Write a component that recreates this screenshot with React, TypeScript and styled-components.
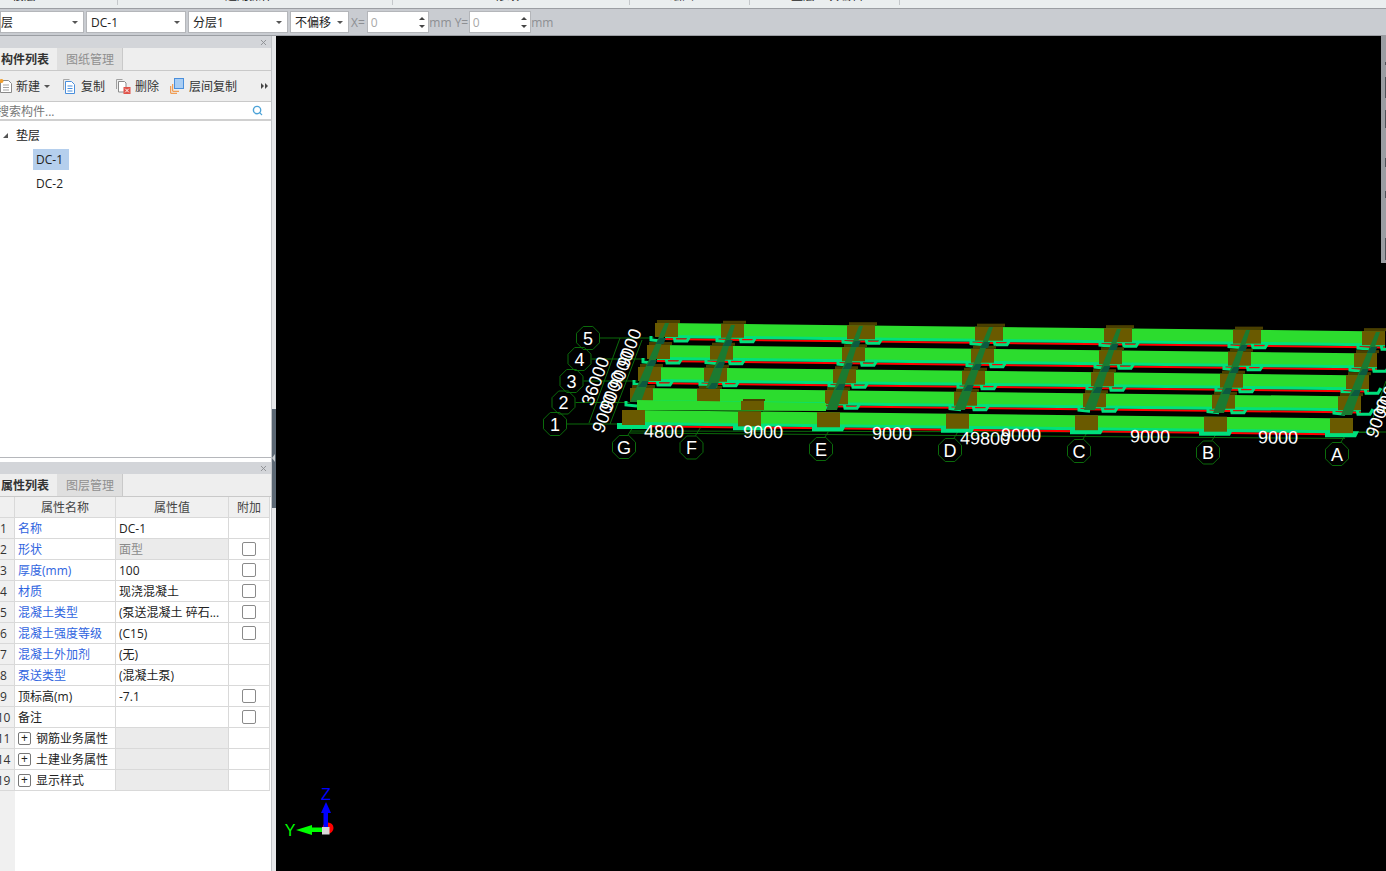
import styled, { createGlobalStyle } from "styled-components";
import { Search, X } from "lucide-react";

const GlobalStyle = createGlobalStyle`
  html, body, #root {
    margin: 0;
    padding: 0;
    width: 100%;
    height: 100%;
    overflow: hidden;
  }
  body {
    font-family: "Open Sans", "Noto Sans CJK SC", sans-serif;
    font-size: 12px;
    color: #222;
  }
`;

const ribbonGroups = [
  { w: 118, text: "楼层", pad: 12 },
  { w: 275, text: "通用操作", pad: 107 },
  { w: 237, text: "修改", pad: 102 },
  { w: 120, text: "绘图", pad: 40 },
  { w: 150, text: "垫层二次编辑", pad: 41 },
];

const selects = [
  { w: 84, text: "层", pad: 0 },
  { w: 100, text: "DC-1", pad: 4 },
  { w: 100, text: "分层1", pad: 4 },
  { w: 59, text: "不偏移", pad: 4 },
];

const props = [
  { no: "1", name: "名称", value: "DC-1", blue: true },
  { no: "2", name: "形状", value: "面型", blue: true, check: true, locked: true },
  { no: "3", name: "厚度(mm)", value: "100", blue: true, check: true },
  { no: "4", name: "材质", value: "现浇混凝土", blue: true, check: true },
  { no: "5", name: "混凝土类型", value: "(泵送混凝土 碎石...", blue: true, check: true },
  { no: "6", name: "混凝土强度等级", value: "(C15)", blue: true, check: true },
  { no: "7", name: "混凝土外加剂", value: "(无)", blue: true },
  { no: "8", name: "泵送类型", value: "(混凝土泵)", blue: true },
  { no: "9", name: "顶标高(m)", value: "-7.1", check: true },
  { no: "10", name: "备注", value: "", check: true },
  { no: "11", name: "钢筋业务属性", group: true },
  { no: "14", name: "土建业务属性", group: true },
  { no: "19", name: "显示样式", group: true },
];

const stripMarks = [
  { top: 26, h: 3 },
  { top: 41, h: 21 },
  { top: 74, h: 18 },
  { top: 122, h: 9 },
  { top: 155, h: 7 },
  { top: 202, h: 22 },
];

// left edge of the concrete blocks on each row, front row first
const rows = [
  { x0: 622, y0: 410, w: 23, cols: [622, 738, 817, 946, 1075, 1204, 1330] },
  { x0: 630, y0: 388, w: 23, cols: [630, 697, 825, 954, 1083, 1212, 1338] },
  { x0: 638, y0: 367, w: 23, cols: [638, 704, 833, 962, 1091, 1220, 1346] },
  { x0: 647, y0: 345, w: 23, cols: [647, 710, 842, 971, 1099, 1228, 1354] },
  { x0: 655, y0: 323, w: 28, cols: [655, 721, 847, 975, 1104, 1233, 1362] },
];
const slope = 0.0115;

const shafts = [
  [666, 323, 634, 402],
  [732, 325, 710, 388],
  [860, 326, 830, 410],
  [990, 327, 958, 410],
  [1118, 329, 1088, 410],
  [1247, 330, 1217, 413],
  [1377, 332, 1345, 415],
];

const rowAxes = [
  { t: "1", x: 555, y: 424 },
  { t: "2", x: 563.5, y: 402.5 },
  { t: "3", x: 571.5, y: 381 },
  { t: "4", x: 579.5, y: 359 },
  { t: "5", x: 588, y: 338 },
];

const colAxes = [
  { t: "G", x: 624, y: 447 },
  { t: "F", x: 691.5, y: 447.5 },
  { t: "E", x: 821, y: 449 },
  { t: "D", x: 950, y: 450 },
  { t: "C", x: 1079, y: 451 },
  { t: "B", x: 1208, y: 452.5 },
  { t: "A", x: 1337, y: 454 },
];

const dims = [
  { t: "4800", x: 664, y: 431 },
  { t: "9000", x: 763, y: 431.5 },
  { t: "9000", x: 892, y: 433 },
  { t: "9000", x: 1021, y: 434.5 },
  { t: "49800", x: 985, y: 438 },
  { t: "9000", x: 1150, y: 436 },
  { t: "9000", x: 1278, y: 437 },
];

const sideDims = [
  { t: "9000", x: 629, y: 348 },
  { t: "9000", x: 621, y: 370 },
  { t: "9000", x: 612, y: 391 },
  { t: "9000", x: 604, y: 413 },
  { t: "36000", x: 595, y: 381 },
];

const bubble = (cx: number, cy: number, r: number) =>
  Array.from({ length: 8 }, (_, i) => {
    const a = (Math.PI * 2 * i) / 8 + Math.PI / 8;
    return `${(cx + r * Math.cos(a)).toFixed(1)},${(cy + r * Math.sin(a)).toFixed(1)}`;
  }).join(" ");

type RowData = (typeof rows)[number];

const BeamRow = ({ r, front }: { r: RowData; front?: boolean }) => {
  const yAt = (x: number) => r.y0 + (x - r.x0) * slope;
  const lastCol = r.cols[r.cols.length - 1];
  const end = lastCol + 23;
  const start = r.x0 + 10;
  return (
    <g>
      <polygon
        fill="#ff0000"
        points={`${start},${yAt(start) + 15} ${end},${yAt(end) + 15} ${end},${yAt(end) + 17} ${start},${yAt(start) + 17}`}
      />
      <polygon
        fill="#00e07c"
        points={`${start},${yAt(start) + 1} ${end},${yAt(end) + 1} ${end},${yAt(end) + 15} ${start},${yAt(start) + 15}`}
      />
      <polygon
        fill="#2cdc2e"
        points={`${start},${yAt(start)} ${end},${yAt(end)} ${end},${yAt(end) + 12} ${start},${yAt(start) + 12}`}
      />
      {r.cols.map((x, i) => {
        const y = yAt(x);
        const w = i === 0 || i === 1 || i === 6 ? 23 : r.w;
        if (front) {
          return (
            <g key={x}>
              <polygon points={`${x - 5},${y + 13} ${x + 29},${y + 13} ${x + 26},${y + 19} ${x - 5},${y + 19}`} fill="#00e07c" />
              <rect x={x} y={y} width={w} height="15" fill="#6a5a00" />
            </g>
          );
        }
        return (
          <g key={x}>
            <polyline
              points={`${x - 4},${y + 13} ${x - 4},${y + 17} ${x + 7},${y + 18}`}
              fill="none"
              stroke="#00e07c"
              strokeWidth="3"
            />
            <polyline
              points={`${x + 19},${y + 13} ${x + 20},${y + 18} ${x + 32},${y + 18} ${x + 35},${y + 13}`}
              fill="none"
              stroke="#00e07c"
              strokeWidth="3"
            />
            <rect x={x + 2} y={y - 3} width={w} height="3" fill="#4a3f00" />
            <rect x={x} y={y} width={w} height="14" fill="#6a5a00" />
          </g>
        );
      })}
    </g>
  );
};

const Scene = () => (
  <SceneSvg viewBox="276 36 1110 835">
    {/* grid lines */}
    <g stroke="#0b6b0b" strokeWidth="1" fill="none">
      {rowAxes.map((a) => (
        <line key={a.t} x1={a.x + 12} y1={a.y} x2={a.x + 66} y2={a.y} />
      ))}
      {colAxes.map((a) => (
        <line key={a.t} x1={a.x + 4} y1={a.y - 12} x2={a.x + 9} y2={a.y - 20} />
      ))}
      <line x1="620" y1="338" x2="589" y2="423" />
      <line x1="642" y1="340" x2="610" y2="424" />
      <line x1="630" y1="431" x2="1372" y2="432.5" />
      <line x1="630" y1="433" x2="1345" y2="438.5" />
      <line x1="1386" y1="381" x2="1368" y2="432" />
      <line x1="1340" y1="432" x2="1386" y2="432" />
      <line x1="1372" y1="410" x2="1386" y2="410" />
      <line x1="1378" y1="389" x2="1386" y2="389" />
    </g>

    {/* back rows first so the front ones overlap them */}
    {rows
      .slice(1)
      .reverse()
      .map((r) => (
        <BeamRow key={r.y0} r={r} />
      ))}

    {/* dark column shafts running across the rows */}
    {shafts.map(([x1, y1, x2, y2]) => {
      const xAt = (y: number) => x1 + ((x2 - x1) * (y - y1)) / (y2 - y1);
      return (
        <g key={x1}>
          <polygon fill="#1b7a30" points={`${x1 - 1},${y1} ${x1 + 3},${y1} ${x2 + 7},${y2} ${x2 - 4},${y2}`} />
          {[15, 37, 58].map((d) => (
            <polygon
              key={d}
              fill="#0c5a40"
              points={`${xAt(y1 + d)},${y1 + d} ${xAt(y1 + d) + 6},${y1 + d} ${xAt(y1 + d + 6) + 6},${y1 + d + 6} ${xAt(y1 + d + 6) - 2},${y1 + d + 6}`}
            />
          ))}
        </g>
      );
    })}

    {/* band between the two front rows */}
    <polygon fill="#2cdc2e" points="637,400 826,403 826,411 637,410" />
    <rect x="741" y="401" width="23" height="9" fill="#6a5a00" />
    <rect x="743" y="399" width="22" height="2" fill="#4a3f00" />

    <BeamRow r={rows[0]} front />

    {/* axis bubbles */}
    {[...rowAxes, ...colAxes].map((a) => (
      <g key={a.t}>
        <polygon points={bubble(a.x, a.y, 12.5)} fill="none" stroke="#0b6b0b" strokeWidth="1" />
        <SceneLabel x={a.x} y={a.y + 6.5} textAnchor="middle">
          {a.t}
        </SceneLabel>
      </g>
    ))}

    {/* dimensions */}
    {dims.map((d) => (
      <SceneLabel key={d.x} x={d.x} y={d.y + 6.5} textAnchor="middle" transform={`rotate(0.6 ${d.x} ${d.y})`}>
        {d.t}
      </SceneLabel>
    ))}
    {sideDims.map((d) => (
      <SceneLabel key={d.y} x={d.x} y={d.y + 6.5} textAnchor="middle" transform={`rotate(-70 ${d.x} ${d.y})`}>
        {d.t}
      </SceneLabel>
    ))}
    <SceneLabel x="1378" y="424" textAnchor="middle" transform="rotate(-70 1378 418)">
      9000
    </SceneLabel>
    <SceneLabel x="1388" y="402" textAnchor="middle" transform="rotate(-70 1388 396)">
      9000
    </SceneLabel>

    {/* axis gizmo */}
    <circle cx="328" cy="828" r="5.5" fill="#ff0000" />
    <rect x="323.5" y="812" width="4.5" height="16" fill="#0000ff" />
    <polygon points="326,802 331,813 321,813" fill="#0000ff" />
    <rect x="311" y="827.5" width="12" height="4.5" fill="#00ff00" />
    <polygon points="296,830 312,825 312,835" fill="#00ff00" />
    <rect x="322" y="827" width="7.5" height="7.5" fill="#d8d8d8" />
    <GizmoLabel x="326" y="800" textAnchor="middle" fill="#0000ff">
      Z
    </GizmoLabel>
    <GizmoLabel x="290" y="836" textAnchor="middle" fill="#00ff00">
      Y
    </GizmoLabel>
  </SceneSvg>
);

const NewIcon = () => (
  <svg width="12" height="14" viewBox="0 0 12 14">
    <path d="M.5 1.5h8l3 3v9H.5z" fill="#fff" stroke="#8a8a8a" />
    <path d="M3 6h6M3 8.5h6M3 11h6" stroke="#a5a5a5" />
    <circle cx="1.5" cy="2" r="2" fill="#f0a030" />
  </svg>
);

const CopyIcon = () => (
  <svg width="12" height="15" viewBox="0 0 12 15">
    <path d="M.5 11V.5h6" fill="none" stroke="#a8a8a8" />
    <path d="M2.5 2.5h6l3 3v9h-9z" fill="#fff" stroke="#4a8fdc" />
    <path d="M4.5 7h5M4.5 9.500h5M4.5 12h5" stroke="#4a8fdc" />
  </svg>
);

const DeleteIcon = () => (
  <svg width="15" height="15" viewBox="0 0 15 15">
    <path d="M.5 10V.5h6" fill="none" stroke="#a0a0a0" />
    <path d="M2.5 2.5h6l1.500 1.500v9h-7.500z" fill="#fff" stroke="#8a8a8a" />
    <rect x="7.5" y="8" width="7" height="7" fill="#e0534a" />
    <path d="M9.200 9.700l3.600 3.600M12.800 9.700l-3.600 3.600" stroke="#fff" />
  </svg>
);

const FloorCopyIcon = () => (
  <svg width="14" height="16" viewBox="0 0 14 16">
    <path d="M.7 8v7.300H7" fill="none" stroke="#f08a30" />
    <path d="M2.700 6v7.300H9" fill="none" stroke="#f08a30" />
    <rect x="4.500" y=".5" width="9" height="10" fill="#a9cdf3" stroke="#4a8fdc" />
  </svg>
);

const Spin = () => (
  <SpinBox>
    <SpinUp />
    <SpinDown />
  </SpinBox>
);

const App = () => {
  return (
    <Page>
      <GlobalStyle />
      <Ribbon>
        {ribbonGroups.map((g) => (
          <RibbonGroup key={g.text} $w={g.w} $pad={g.pad}>
            <RibbonText>{g.text}</RibbonText>
          </RibbonGroup>
        ))}
      </Ribbon>
      <Toolbar>
        {selects.map((s) => (
          <SelectBox key={s.text} $w={s.w} $pad={s.pad}>
            <span>{s.text}</span>
            <ArrowGlyph />
          </SelectBox>
        ))}
        <FieldLabel>X=</FieldLabel>
        <NumberBox>
          0
          <Spin />
        </NumberBox>
        <FieldLabel $tight>mm Y=</FieldLabel>
        <NumberBox>
          0
          <Spin />
        </NumberBox>
        <FieldLabel $tight>mm</FieldLabel>
      </Toolbar>
      <Main>
        <Sidebar>
          <ComponentPane>
            <PaneHeader>
              <X size={9} strokeWidth={2.4} color="#8b8d91" />
            </PaneHeader>
            <Tabs>
              <Tab $active>构件列表</Tab>
              <Tab>图纸管理</Tab>
            </Tabs>
            <ActionBar>
              <Action $w={63} $gap={4}>
                <NewIcon />
                <span>新建</span>
                <Caret />
              </Action>
              <Action $w={53} $gap={6}>
                <CopyIcon />
                <span>复制</span>
              </Action>
              <Action $w={54} $gap={4}>
                <DeleteIcon />
                <span>删除</span>
              </Action>
              <Action $w={90} $gap={5}>
                <FloorCopyIcon />
                <span>层间复制</span>
              </Action>
              <More>
                <MoreArrow />
                <MoreArrow />
              </More>
            </ActionBar>
            <SearchRow>
              <span>搜索构件...</span>
              <Search size={11} strokeWidth={3} color="#4da3d8" />
            </SearchRow>
            <Tree>
              <TreeGroup>
                <TreeToggle />
                <span>垫层</span>
              </TreeGroup>
              <TreeItem $selected>DC-1</TreeItem>
              <TreeItem>DC-2</TreeItem>
            </Tree>
          </ComponentPane>
          <PropertyPane>
            <PaneHeader>
              <X size={9} strokeWidth={2.4} color="#8b8d91" />
            </PaneHeader>
            <Tabs>
              <Tab $active>属性列表</Tab>
              <Tab>图层管理</Tab>
            </Tabs>
            <TableWrap>
              <Table>
                <HeadRow>
                  <NoCell />
                  <HeadCell>属性名称</HeadCell>
                  <HeadCell>属性值</HeadCell>
                  <HeadCell>附加</HeadCell>
                </HeadRow>
                {props.map((p) => (
                  <Row key={p.no}>
                    <NoCell>{p.no}</NoCell>
                    <NameCell $blue={p.blue}>
                      {p.group && <Plus>+</Plus>}
                      {p.name}
                    </NameCell>
                    <ValueCell $locked={p.locked} $group={p.group}>
                      {p.value}
                    </ValueCell>
                    <AttachCell>{p.check && <Check />}</AttachCell>
                  </Row>
                ))}
              </Table>
            </TableWrap>
          </PropertyPane>
        </Sidebar>
        <Splitter>
          <SplitterHandle />
        </Splitter>
        <Viewport>
          <Scene />
          <SideStrip>
            {stripMarks.map((m) => (
              <StripMark key={m.top} $top={m.top} $h={m.h} />
            ))}
          </SideStrip>
        </Viewport>
      </Main>
    </Page>
  );
};

const Page = styled.div`
  width: 1386px;
  height: 871px;
  display: flex;
  flex-direction: column;
  background: #fff;
  overflow: hidden;
`;

const Ribbon = styled.div`
  height: 9px;
  box-sizing: border-box;
  display: flex;
  flex-shrink: 0;
  background: #eaeeef;
  border-bottom: 1px solid #9b9ea3;
  overflow: hidden;
`;

const RibbonGroup = styled.div<{ $w: number; $pad: number }>`
  width: ${(p) => p.$w}px;
  height: 5px;
  box-sizing: border-box;
  padding-left: ${(p) => p.$pad}px;
  border-right: 1px solid #c4c8cb;
  overflow: hidden;
  white-space: nowrap;
`;

const RibbonText = styled.div`
  margin-top: -12px;
  line-height: 16px;
  color: #222;
`;

const Toolbar = styled.div`
  height: 27px;
  flex-shrink: 0;
  display: flex;
  align-items: center;
  gap: 2px;
  background: #c9ccd1;
  border-bottom: 1px solid #9b9ea3;
  box-sizing: border-box;
`;

const SelectBox = styled.div<{ $w: number; $pad: number }>`
  width: ${(p) => p.$w}px;
  height: 22px;
  box-sizing: border-box;
  display: flex;
  align-items: center;
  justify-content: space-between;
  padding: 0 5px 0 ${(p) => p.$pad}px;
  background: #fff;
  border: 1px solid #b4b6ba;
  color: #222;
`;

const ArrowGlyph = styled.i`
  width: 0;
  height: 0;
  border-left: 3px solid transparent;
  border-right: 3px solid transparent;
  border-top: 3px solid #555;
`;

const FieldLabel = styled.span<{ $tight?: boolean }>`
  margin: 0 ${(p) => (p.$tight ? "-1.5px" : "0")};
  color: #8d8f93;
  font-size: 12px;
  white-space: nowrap;
`;

const NumberBox = styled.div`
  width: 62px;
  height: 22px;
  box-sizing: border-box;
  display: flex;
  align-items: center;
  justify-content: space-between;
  padding: 0 2px 0 3px;
  background: #fff;
  border: 1px solid #b4b6ba;
  color: #a8a8a8;
`;

const SpinBox = styled.div`
  display: flex;
  flex-direction: column;
  gap: 5px;
  padding-right: 1px;
`;

const SpinUp = styled.i`
  width: 0;
  height: 0;
  border-left: 3px solid transparent;
  border-right: 3px solid transparent;
  border-bottom: 3px solid #444;
`;

const SpinDown = styled.i`
  width: 0;
  height: 0;
  border-left: 3px solid transparent;
  border-right: 3px solid transparent;
  border-top: 3px solid #444;
`;

const Main = styled.div`
  flex: 1;
  min-height: 0;
  display: flex;
`;

const Sidebar = styled.div`
  width: 272px;
  flex-shrink: 0;
  display: flex;
  flex-direction: column;
  background: #fff;
  border-right: 1px solid #c2c4c8;
  box-sizing: border-box;
`;

const ComponentPane = styled.div`
  height: 422px;
  box-sizing: border-box;
  display: flex;
  flex-direction: column;
  border-bottom: 1px solid #b5b7bb;
`;

const PropertyPane = styled.div`
  flex: 1;
  min-height: 0;
  margin-top: 4px;
  display: flex;
  flex-direction: column;
`;

const PaneHeader = styled.div`
  height: 12px;
  flex-shrink: 0;
  display: flex;
  align-items: center;
  justify-content: flex-end;
  padding-right: 3px;
  background: #d3d5d9;
`;

const Tabs = styled.div`
  height: 23px;
  flex-shrink: 0;
  display: flex;
  background: #eeeeee;
  border-bottom: 1px solid #c9c9c9;
  box-sizing: border-box;
`;

const Tab = styled.div<{ $active?: boolean }>`
  display: flex;
  align-items: center;
  box-sizing: border-box;
  width: ${(p) => (p.$active ? 57 : 66)}px;
  padding-left: ${(p) => (p.$active ? 1 : 9)}px;
  font-weight: ${(p) => (p.$active ? 600 : 400)};
  color: ${(p) => (p.$active ? "#333" : "#8f8f8f")};
  background: ${(p) => (p.$active ? "#eeeeee" : "#dfdfdf")};
  border-right: ${(p) => (p.$active ? "none" : "1px solid #c9c9c9")};
  white-space: nowrap;
`;

const ActionBar = styled.div`
  height: 31px;
  flex-shrink: 0;
  display: flex;
  align-items: center;
  background: #eeeeee;
  border-bottom: 1px solid #c9c9c9;
  box-sizing: border-box;
`;

const Action = styled.div<{ $w: number; $gap: number }>`
  width: ${(p) => p.$w}px;
  display: flex;
  align-items: center;
  gap: ${(p) => p.$gap}px;
  color: #333;
  white-space: nowrap;
`;

const Caret = styled.i`
  width: 0;
  height: 0;
  border-left: 3px solid transparent;
  border-right: 3px solid transparent;
  border-top: 3px solid #555;
`;

const More = styled.div`
  margin-left: auto;
  padding-right: 3px;
  display: flex;
`;

const MoreArrow = styled.i`
  width: 0;
  height: 0;
  border-top: 3px solid transparent;
  border-bottom: 3px solid transparent;
  border-left: 3px solid #444;
  margin-left: 1px;
`;

const SearchRow = styled.div`
  height: 19px;
  flex-shrink: 0;
  display: flex;
  align-items: center;
  justify-content: space-between;
  padding-right: 8px;
  margin-left: -3px;
  color: #777;
  background: #fff;
  border-bottom: 2px solid #d0d0d0;
  box-sizing: border-box;
`;

const Tree = styled.div`
  flex: 1;
  padding-top: 2px;
  background: #fff;
`;

const TreeGroup = styled.div`
  height: 24px;
  margin-bottom: 2px;
  display: flex;
  align-items: center;
  gap: 8px;
  padding-left: 3px;
  color: #222;
`;

const TreeToggle = styled.i`
  width: 0;
  height: 0;
  border-left: 5px solid transparent;
  border-bottom: 5px solid #555;
`;

const TreeItem = styled.div<{ $selected?: boolean }>`
  height: 21px;
  width: 36px;
  margin: 0 0 3px 33px;
  padding-left: 3px;
  box-sizing: border-box;
  line-height: 21px;
  color: #222;
  background: ${(p) => (p.$selected ? "#b5cfed" : "transparent")};
`;

const TableWrap = styled.div`
  flex: 1;
  min-height: 0;
  background: linear-gradient(to right, #f0f0f0 15px, #fff 15px);
`;

const Table = styled.div`
  width: 270px;
  display: flex;
  flex-direction: column;
`;

const Row = styled.div`
  height: 21px;
  display: grid;
  grid-template-columns: 15px 101px 113px 41px;
  box-sizing: border-box;
  border-bottom: 1px solid #d9d9d9;
  background: #fff;
`;

const HeadRow = styled(Row)`
  background: #f0f0f0;
`;

const Cell = styled.div`
  display: flex;
  align-items: center;
  box-sizing: border-box;
  border-right: 1px solid #d9d9d9;
  white-space: nowrap;
  overflow: hidden;
`;

const NoCell = styled(Cell)`
  justify-content: center;
  padding-right: 7px;
  background: #f0f0f0;
  color: #333;
`;

const HeadCell = styled(Cell)`
  justify-content: center;
  color: #444;
`;

const NameCell = styled(Cell)<{ $blue?: boolean }>`
  padding-left: 3px;
  color: ${(p) => (p.$blue ? "#2f64e0" : "#222")};
`;

const ValueCell = styled(Cell)<{ $locked?: boolean; $group?: boolean }>`
  padding-left: 3px;
  color: ${(p) => (p.$locked ? "#8a8a8a" : "#222")};
  background: ${(p) => (p.$locked || p.$group ? "#ebebeb" : "#fff")};
`;

const AttachCell = styled(Cell)`
  justify-content: center;
`;

const Check = styled.div`
  width: 14px;
  height: 14px;
  box-sizing: border-box;
  border: 1px solid #8a8a8a;
  border-radius: 2px;
  background: #fff;
`;

const Plus = styled.span`
  width: 13px;
  height: 13px;
  margin-right: 5px;
  box-sizing: border-box;
  display: flex;
  align-items: center;
  justify-content: center;
  border: 1px solid #777;
  border-radius: 2px;
  font-size: 12px;
  line-height: 1;
  color: #222;
`;

const Splitter = styled.div`
  width: 4px;
  flex-shrink: 0;
  background: #e6e7e9;
  position: relative;
`;

const SplitterHandle = styled.div`
  position: absolute;
  left: 0;
  top: 373px;
  width: 4px;
  height: 99px;
  background: #5c6874;

  &::after {
    content: "";
    position: absolute;
    left: 0;
    top: 45px;
    border-top: 4px solid transparent;
    border-bottom: 4px solid transparent;
    border-right: 3px solid #c8ccd0;
  }
`;

const Viewport = styled.div`
  flex: 1;
  min-width: 0;
  position: relative;
  background: #000;
  overflow: hidden;
`;

const SceneSvg = styled.svg`
  display: block;
  width: 100%;
  height: 100%;
`;

const SceneLabel = styled.text`
  font-family: "Liberation Sans", sans-serif;
  font-size: 18px;
  fill: #ffffff;
`;

const GizmoLabel = styled.text`
  font-family: "Liberation Sans", sans-serif;
  font-size: 16px;
`;

const SideStrip = styled.div`
  position: absolute;
  top: 0;
  right: 0;
  width: 5px;
  height: 227px;
  background: #9a9da2;
`;

const StripMark = styled.div<{ $top: number; $h: number }>`
  position: absolute;
  right: 0;
  width: 1px;
  top: ${(p) => p.$top}px;
  height: ${(p) => p.$h}px;
  background: #4c5157;
`;

export default App;
